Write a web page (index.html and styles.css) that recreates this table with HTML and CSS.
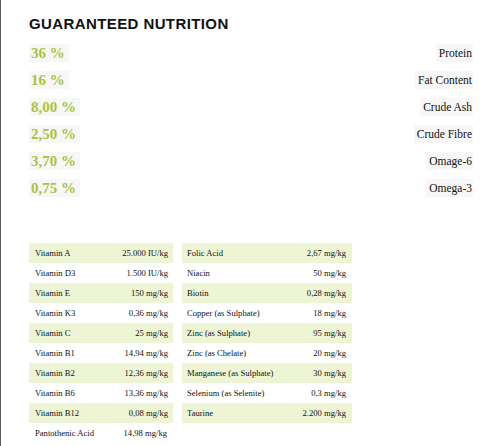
FILE: index.html
```html
<!DOCTYPE html>
<html>
<head>
<meta charset="utf-8">
<link rel="stylesheet" href="styles.css">
</head>
<body>
<div class="page">
  <h1 class="title">GUARANTEED NUTRITION</h1>
  <div class="analysis">
    <div class="row"><span class="pct">36 %</span><span class="name">Protein</span></div>
    <div class="row"><span class="pct">16 %</span><span class="name">Fat Content</span></div>
    <div class="row"><span class="pct">8,00 %</span><span class="name">Crude Ash</span></div>
    <div class="row"><span class="pct">2,50 %</span><span class="name">Crude Fibre</span></div>
    <div class="row"><span class="pct">3,70 %</span><span class="name">Omage-6</span></div>
    <div class="row"><span class="pct">0,75 %</span><span class="name">Omega-3</span></div>
  </div>
  <div class="tables">
    <table class="vt vt-left">
      <tr><td>Vitamin A</td><td class="val">25.000 IU/kg</td></tr>
      <tr><td>Vitamin D3</td><td class="val">1.500 IU/kg</td></tr>
      <tr><td>Vitamin E</td><td class="val">150 mg/kg</td></tr>
      <tr><td>Vitamin K3</td><td class="val">0,36 mg/kg</td></tr>
      <tr><td>Vitamin C</td><td class="val">25 mg/kg</td></tr>
      <tr><td>Vitamin B1</td><td class="val">14,94 mg/kg</td></tr>
      <tr><td>Vitamin B2</td><td class="val">12,36 mg/kg</td></tr>
      <tr><td>Vitamin B6</td><td class="val">13,36 mg/kg</td></tr>
      <tr><td>Vitamin B12</td><td class="val">0,08 mg/kg</td></tr>
      <tr class="last"><td>Pantothenic Acid</td><td class="val">14,98 mg/kg</td></tr>
    </table>
    <table class="vt vt-right">
      <tr><td>Folic Acid</td><td class="val">2,67 mg/kg</td></tr>
      <tr><td>Niacin</td><td class="val">50 mg/kg</td></tr>
      <tr><td>Biotin</td><td class="val">0,28 mg/kg</td></tr>
      <tr><td>Copper (as Sulphate)</td><td class="val">18 mg/kg</td></tr>
      <tr><td>Zinc (as Sulphate)</td><td class="val">95 mg/kg</td></tr>
      <tr><td>Zinc (as Chelate)</td><td class="val">20 mg/kg</td></tr>
      <tr><td>Manganese (as Sulphate)</td><td class="val">30 mg/kg</td></tr>
      <tr><td>Selenium (as Selenite)</td><td class="val">0,3 mg/kg</td></tr>
      <tr><td>Taurine</td><td class="val">2.200 mg/kg</td></tr>
    </table>
  </div>
</div>
</body>
</html>
```

FILE: styles.css
```css
html, body {
  margin: 0;
  padding: 0;
  background: #ffffff;
}
body {
  border-left: 1px solid #5a5a5a;
  min-height: 446px;
  box-sizing: border-box;
  overflow: hidden;
}
.page {
  padding: 15px 0 0 28px;
  width: 444px;
}
.title {
  margin: 0 0 11px 0;
  font-family: "Liberation Sans", Arial, sans-serif;
  font-weight: bold;
  font-size: 15px;
  letter-spacing: 0.4px;
  line-height: 18px;
  color: #111111;
}
.analysis {
  display: flex;
  flex-direction: column;
  gap: 9px;
}
.row {
  display: flex;
  justify-content: space-between;
  align-items: center;
  height: 18px;
}
.pct {
  font-family: "Liberation Serif", "Times New Roman", serif;
  font-weight: bold;
  font-size: 15px;
  line-height: 18px;
  color: #a9c43b;
  background: #f7f7f7;
  padding: 0 4px 0 2px;
}
.name {
  font-family: "Liberation Serif", "Times New Roman", serif;
  font-size: 11.5px;
  line-height: 18px;
  color: #111111;
  background: #f7f7f7;
  padding: 0 1px 0 3px;
}
.tables {
  display: flex;
  align-items: flex-start;
  gap: 9px;
  margin-top: 46px;
}
.vt {
  border-collapse: collapse;
  font-family: "Liberation Serif", "Times New Roman", serif;
  font-size: 8.6px;
  color: #111111;
}
.vt-left { width: 144px; }
.vt-right { width: 170px; }
.vt td {
  height: 20px;
  padding: 0 5px 0 6px;
  vertical-align: middle;
  white-space: nowrap;
}
.vt-right td { padding: 0 6px 0 5px; }
.vt tr:nth-child(odd) td {
  background: #eef5d5;
}
.vt .val {
  text-align: right;
}
.vt tr.last td {
  background: #ffffff;
}
.vt tr.last .val {
  padding-right: 6px;
}
```
